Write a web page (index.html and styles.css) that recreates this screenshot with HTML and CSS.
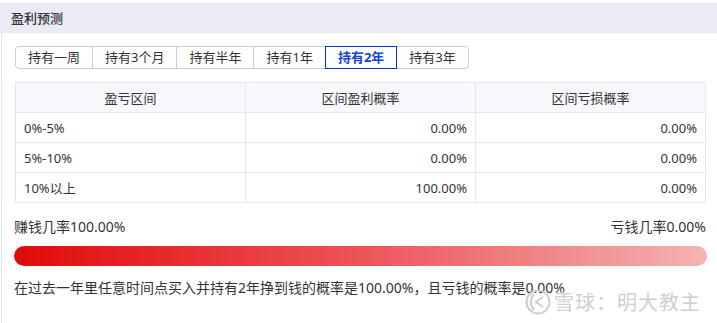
FILE: index.html
```html
<!DOCTYPE html>
<html lang="zh-CN">
<head>
  <meta charset="UTF-8" />
  <title>盈利预测</title>
  <link rel="stylesheet" href="styles.css">
</head>
<body>

  <div class="panel">
    <!-- Titre -->
    <div class="panel-title">盈利预测</div>

    <div class="panel-body">
      <!-- Onglets de durée -->
      <div class="tabs">
        <span class="tab">持有一周</span>
        <span class="tab">持有3个月</span>
        <span class="tab">持有半年</span>
        <span class="tab">持有1年</span>
        <span class="tab active">持有2年</span>
        <span class="tab">持有3年</span>
      </div>

      <!-- Tableau des probabilités -->
      <table class="prob-table">
        <thead>
          <tr>
            <th>盈亏区间</th>
            <th>区间盈利概率</th>
            <th>区间亏损概率</th>
          </tr>
        </thead>
        <tbody>
          <tr>
            <td>0%-5%</td>
            <td class="num">0.00%</td>
            <td class="num">0.00%</td>
          </tr>
          <tr>
            <td>5%-10%</td>
            <td class="num">0.00%</td>
            <td class="num">0.00%</td>
          </tr>
          <tr>
            <td>10%以上</td>
            <td class="num">100.00%</td>
            <td class="num">0.00%</td>
          </tr>
        </tbody>
      </table>

      <!-- Barre gain / perte -->
      <div class="rates">
        <span>赚钱几率100.00%</span>
        <span>亏钱几率0.00%</span>
      </div>
      <div class="rate-bar"></div>

      <p class="summary">在过去一年里任意时间点买入并持有2年挣到钱的概率是100.00%，且亏钱的概率是0.00%</p>
    </div>

    <!-- Filigrane -->
    <div class="watermark">
      <svg width="26" height="26" viewBox="0 0 26 26">
        <circle cx="13" cy="13" r="11.5" fill="none" stroke="#cfcfcf" stroke-width="2" />
        <path d="M9 5 C5 9 5 17 9 21" fill="none" stroke="#cfcfcf" stroke-width="2" />
        <path d="M18 8 L11 13 L18 18" fill="none" stroke="#cfcfcf" stroke-width="2" />
      </svg>
      <span>雪球：明大教主</span>
    </div>
  </div>

</body>
</html>
```

FILE: styles.css
```css
body {
  margin: 0;
  padding: 0;
  background: #fff;
  font-family: "Noto Sans", "Noto Sans CJK SC", sans-serif;
  color: #333;
}
.panel {
  position: relative;
  width: 717px;
  height: 323px;
  padding-top: 3px;
  box-sizing: border-box;
  overflow: hidden;
}
.panel-title {
  height: 30px;
  line-height: 30px;
  padding-left: 11px;
  background: #ebebf5;
  font-size: 13px;
  font-weight: 500;
  color: #333;
}
.panel-body {
  margin-left: 1px;
  border-left: 1px solid #e6e6f2;
  padding: 13px 11px 40px 13px;
}
.tabs {
  display: flex;
}
.tab {
  position: relative;
  height: 21px;
  line-height: 21px;
  padding: 0 12px;
  border: 1px solid #ccc;
  margin-left: -1px;
  font-size: 13px;
  color: #333;
  cursor: pointer;
}
.tab:first-child {
  margin-left: 0;
  border-radius: 4px 0 0 4px;
}
.tab:last-child {
  border-radius: 0 4px 4px 0;
}
.tab.active {
  z-index: 1;
  border-color: #0a32c8;
  color: #1444d2;
  font-weight: bold;
}
.prob-table {
  width: 100%;
  margin-top: 13px;
  border-collapse: collapse;
  table-layout: fixed;
  font-size: 13px;
}
.prob-table th,
.prob-table td {
  height: 29px;
  border: 1px solid #e6e6f2;
  padding: 0 8px;
  color: #333;
}
.prob-table th {
  background: #f7f7fc;
  font-weight: normal;
  text-align: center;
}
.prob-table td {
  text-align: left;
}
.prob-table td.num {
  text-align: right;
}
.rates {
  display: flex;
  justify-content: space-between;
  margin: 14px 0 0 -1px;
  line-height: 20px;
  font-size: 14px;
}
.rate-bar {
  height: 20px;
  margin: 9px -1px 0 -1px;
  border-radius: 10px;
  background: linear-gradient(to right, #e20a0a, #ec5458 50%, #f5b3b3);
}
.summary {
  margin: 12px 0 0 -1px;
  line-height: 20px;
  font-size: 14px;
  color: #333;
}
.watermark {
  position: absolute;
  left: 525px;
  top: 287px;
  display: flex;
  align-items: center;
  gap: 3px;
  font-size: 20px;
  letter-spacing: 1px;
  color: #cfcfcf;
  text-shadow: 0 0 2px #fff, 0 0 2px #fff;
}
```
